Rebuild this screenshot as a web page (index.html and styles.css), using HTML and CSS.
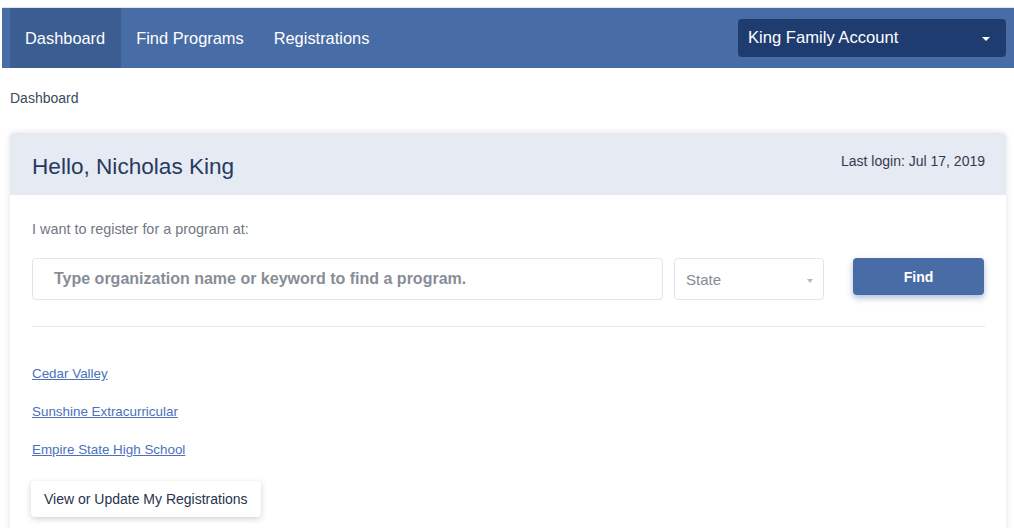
FILE: index.html
```html
<!DOCTYPE html>
<html lang="en">

<head>
    <meta charset="UTF-8">
    <meta name="viewport" content="width=device-width, initial-scale=1.0">
    <title>Dashboard</title>
    <link rel="stylesheet" href="styles.css">
</head>

<body>
    <div class="page">
        <nav class="topnav">
            <ul class="topnav__links">
                <li><a href="#" class="topnav__link active">Dashboard</a></li>
                <li><a href="#" class="topnav__link">Find Programs</a></li>
                <li><a href="#" class="topnav__link">Registrations</a></li>
            </ul>
            <div class="account">
                <span>King Family Account</span>
                <span class="account__caret"></span>
            </div>
        </nav>

        <main class="content">
            <div class="breadcrumb">Dashboard</div>

            <section class="card">
                <header class="card__header">
                    <h1>Hello, Nicholas King</h1>
                    <span class="last-login">Last login: Jul 17, 2019</span>
                </header>
                <div class="card__body">
                    <p class="label">I want to register for a program at:</p>
                    <form action="#" class="search">
                        <input type="text" class="search__input" placeholder="Type organization name or keyword to find a program.">
                        <div class="search__state">
                            <span>State</span>
                            <span class="state__caret"></span>
                        </div>
                        <button class="search__btn">Find</button>
                    </form>
                    <hr class="divider">
                    <ul class="orgs">
                        <li><a href="#">Cedar Valley</a></li>
                        <li><a href="#">Sunshine Extracurricular</a></li>
                        <li><a href="#">Empire State High School</a></li>
                    </ul>
                    <button class="my-regs">View or Update My Registrations</button>
                </div>
            </section>
        </main>
    </div>
</body>

</html>
```

FILE: styles.css
```css
* {
    margin: 0;
    padding: 0;
    box-sizing: border-box;
}

body {
    font-family: "Liberation Sans", Arial, sans-serif;
    background: #fff;
    color: #2b3a55;
    overflow: hidden;
}

.page {
    margin: 7px 0 0 2px;
    border-top: 1px solid #dfe4ee;
}

.topnav {
    height: 60px;
    background: #486ca6;
    display: flex;
    align-items: center;
    justify-content: space-between;
    padding: 0 8px;
}

.topnav__links {
    list-style: none;
    display: flex;
    height: 100%;
}

.topnav__link {
    display: flex;
    align-items: center;
    height: 100%;
    padding: 0 15px;
    color: #fff;
    text-decoration: none;
    font-size: 16.4px;
}

.topnav__link.active {
    background: #3c5d92;
    padding-right: 16px;
}

.account {
    width: 268px;
    height: 38px;
    background: #1e3c70;
    border-radius: 4px;
    color: #fff;
    font-size: 16.6px;
    display: flex;
    align-items: center;
    justify-content: space-between;
    padding: 0 16px 0 10px;
}

.account__caret {
    width: 0;
    height: 0;
    border-left: 4px solid transparent;
    border-right: 4px solid transparent;
    border-top: 4px solid #fff;
    margin-top: 2px;
}

.content {
    padding: 0 8px;
}

.breadcrumb {
    font-size: 14px;
    color: #3a4a60;
    height: 65px;
    line-height: 60px;
}

.card {
    background: #fff;
    border-radius: 4px;
    box-shadow: 0 0 6px rgba(0, 0, 0, .12);
}

.card__header {
    height: 62px;
    background: #e6eaf3;
    border-radius: 4px 4px 0 0;
    display: flex;
    align-items: center;
    justify-content: space-between;
    padding: 0 21px 0 22px;
}

.card__header h1 {
    font-size: 22.6px;
    font-weight: normal;
    color: #263a5e;
    margin-top: 6px;
}

.last-login {
    font-size: 14px;
    color: #333a4f;
    margin-top: -6px;
}

.card__body {
    padding: 26px 21px 20px 22px;
}

.label {
    font-size: 14.4px;
    color: #6f7882;
    line-height: 17px;
}

.search {
    display: flex;
    align-items: flex-start;
    margin-top: 20px;
}

.search__input {
    width: 631px;
    height: 42px;
    border: 1px solid #e2e5ea;
    border-radius: 4px;
    padding: 0 21px;
    font-family: inherit;
    font-size: 16px;
    font-weight: bold;
    outline: none;
}

.search__input::placeholder {
    color: #878d96;
}

.search__state {
    width: 150px;
    height: 42px;
    margin-left: 11px;
    border: 1px solid #e2e5ea;
    border-radius: 4px;
    display: flex;
    align-items: center;
    justify-content: space-between;
    padding: 0 10px 0 11px;
    font-size: 15px;
    color: #858b94;
}

.state__caret {
    width: 0;
    height: 0;
    border-left: 3px solid transparent;
    border-right: 3px solid transparent;
    border-top: 4px solid #b5b9be;
    margin-top: 4px;
}

.search__btn {
    width: 131px;
    height: 37px;
    margin-left: 29px;
    border: none;
    border-radius: 4px;
    background: #486ca6;
    color: #fff;
    font-family: inherit;
    font-size: 14px;
    font-weight: bold;
    box-shadow: 0 3px 6px rgba(72, 108, 166, .45);
}

.divider {
    border: none;
    border-top: 1px solid #e3e6ee;
    margin-top: 26px;
}

.orgs {
    list-style: none;
    margin-top: 39px;
}

.orgs li {
    height: 38px;
    font-size: 13.4px;
}

.orgs a {
    color: #4a72bd;
}

.my-regs {
    margin-top: 1px;
    height: 36px;
    padding: 0 13px;
    background: #fff;
    border: none;
    border-radius: 4px;
    box-shadow: 0 2px 6px rgba(0, 0, 0, .18);
    font-family: inherit;
    font-size: 14px;
    color: #27334d;
    margin-left: -1px;
}
```
